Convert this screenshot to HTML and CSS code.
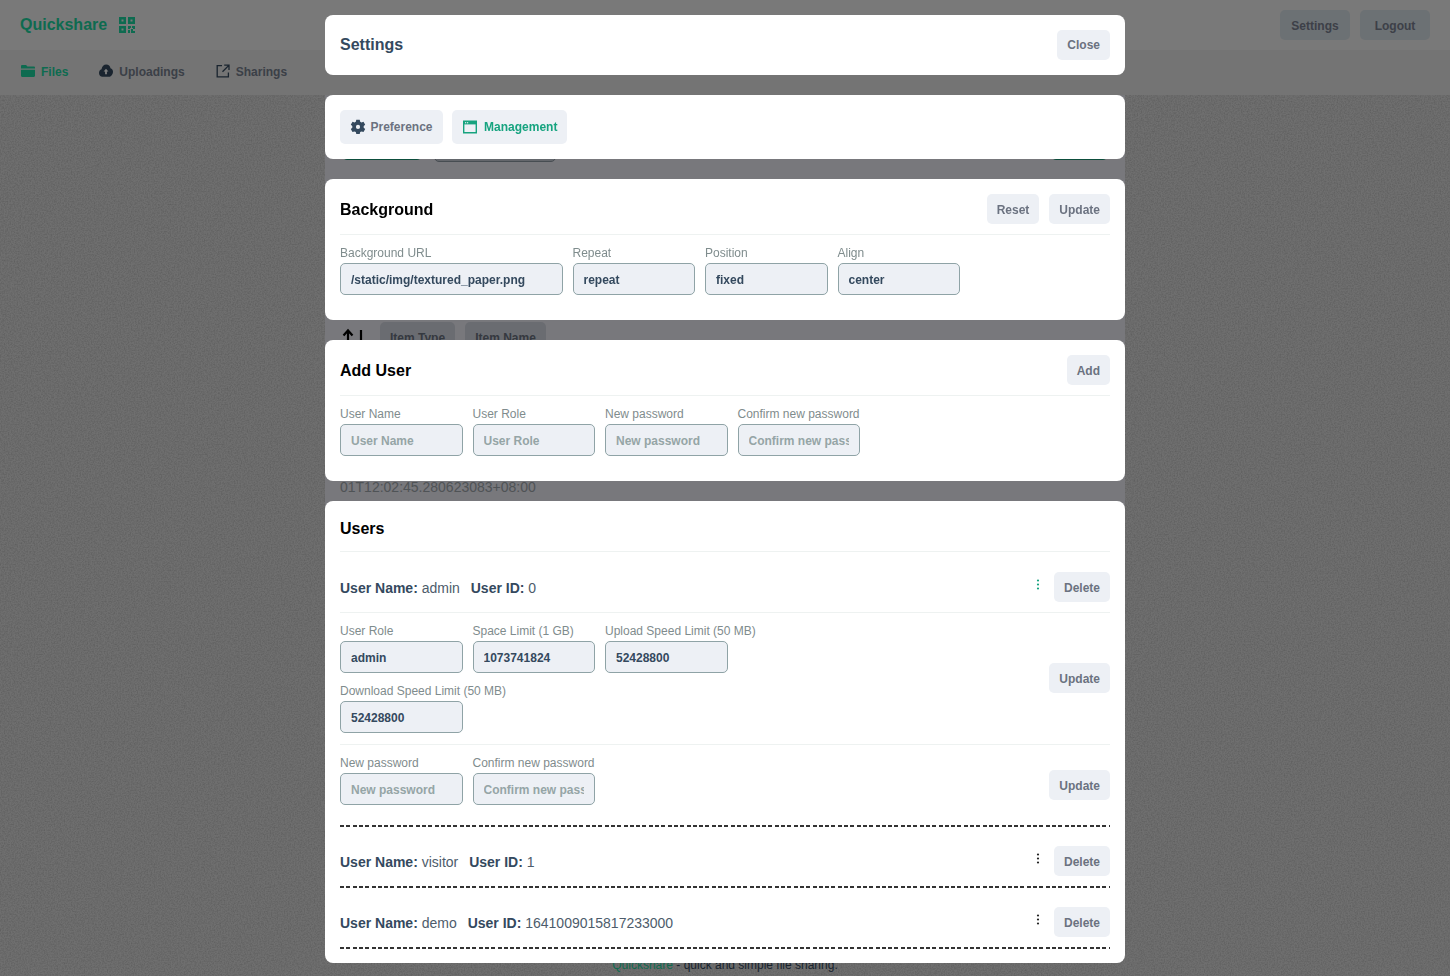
FILE: index.html
```html
<!DOCTYPE html>
<html lang="en">
<head>
  <meta charset="UTF-8">
  <meta name="viewport" content="width=device-width, initial-scale=1.0">
  <title>Quickshare</title>
  <link rel="stylesheet" href="styles.css">
</head>
<body>
  <!-- paper texture behind the page -->
  <svg class="texture" width="1450" height="976" aria-hidden="true">
    <filter id="paper">
      <feTurbulence type="fractalNoise" baseFrequency="0.7" numOctaves="2" seed="4"/>
      <feColorMatrix type="matrix" values="0 0 0 0 0.42  0 0 0 0 0.42  0 0 0 0 0.42  1.2 0 0 0 -0.42"/>
    </filter>
    <rect width="1450" height="976" filter="url(#paper)"/>
  </svg>

  <div class="page">
    <header class="topbar">
      <div class="brand">
        <span>Quickshare</span>
        <svg class="brand-icon" viewBox="0 0 16 16" width="16" height="16">
          <path fill="currentColor" fill-rule="evenodd" d="M0 0h7v7H0zM2.500 2.500v2h2v-2zM9 0h7v7H9zM11.500 2.500v2h2v-2zM0 9h7v7H0zM2.500 11.500v2h2v-2zM9 9h3v2h-1v1H9zM13 9h3v3h-2v-1h-1zM9 13h2v3H9zM12 12h2v2h2v2h-4z"/>
        </svg>
      </div>
      <div class="topbar-actions">
        <button class="btn btn-back">Settings</button>
        <button class="btn btn-back">Logout</button>
      </div>
    </header>
    <nav class="nav">
      <a class="nav-item active">
        <svg viewBox="0 0 16 16" width="16" height="16"><path fill="currentColor" d="M1 2.200C1 1.500 1.500 1 2.200 1h3.900l1.300 1.500h6.400c.7 0 1.200.5 1.200 1.200V4.600H1zM1 5.800h14v6c0 .7-.5 1.200-1.200 1.200H2.200C1.500 13 1 12.500 1 11.800z"/></svg>
        Files
      </a>
      <a class="nav-item">
        <svg viewBox="0 0 16 16" width="16" height="16"><path fill="currentColor" d="M8.200 0.500c2.300 0 4 1.600 4.300 3.700 1.500.5 2.500 1.900 2.500 3.500 0 2.200-1.700 5-3.800 5H4.400C2.500 12.700 1 11 1 8.900c0-1.700 1-3.100 2.500-3.600C4 2.500 5.900 0.500 8.200 0.500z"/><path fill="#fff" d="M8 4.800l2.400 2.800H8.900v2.700H7.100V7.600H5.600z"/></svg>
        Uploadings
      </a>
      <a class="nav-item">
        <svg viewBox="0 0 16 16" width="16" height="16"><path fill="none" stroke="currentColor" stroke-width="1.300" d="M7 1.700H2.200v11.200h11.200V8.500M9.200 1.200h4.800V6M13.800 1.400L7.500 7.700"/></svg>
        Sharings
      </a>
    </nav>
    <main class="files-panel">
      <div class="files-toolbar">
        <div class="files-toolbar-left">
          <button class="btn-upload">Upload</button>
          <div class="files-input"></div>
        </div>
        <button class="btn-upload btn-upload-small">New</button>
      </div>
      <div class="files-sort">
        <svg viewBox="0 0 22 18" width="22" height="18"><path fill="none" stroke="#000" stroke-width="2.200" d="M6 17V3M1.500 7.500L6 2.500l4.500 5M19 2v15"/></svg>
        <button class="btn-sort sort-type">Item Type</button>
        <button class="btn-sort sort-name">Item Name</button>
      </div>
      <div class="files-date">01T12:02:45.280623083+08:00</div>
    </main>
    <footer class="footer"><span class="footer-link">Quickshare</span> - quick and simple file sharing.</footer>
  </div>

  <div class="overlay">
    <section class="card card-bar">
      <h2 class="card-title title-settings">Settings</h2>
      <button class="btn">Close</button>
    </section>

    <section class="card tabs">
      <button class="tab">
        <svg viewBox="0 0 16 16" width="16" height="16"><path fill="#34495e" fill-rule="evenodd" d="M6.300 .7h3.400l.5 2 1.300.7 2-.6 1.700 2.900-1.500 1.400v1.600l1.500 1.400-1.700 2.900-2-.6-1.300.7-.5 2H6.300l-.5-2-1.300-.7-2 .6L.8 10.100l1.500-1.400V7.100L.8 5.700l1.700-2.900 2 .6 1.300-.7zM8 5.800a2.100 2.100 0 1 0 0 4.200 2.100 2.100 0 0 0 0-4.200z"/></svg>
        Preference
      </button>
      <button class="tab tab-active">
        <svg viewBox="0 0 16 16" width="16" height="16"><path fill="none" stroke="currentColor" stroke-width="1.400" d="M1.700 2.200h12.600v11.600H1.700z"/><path fill="currentColor" d="M1.700 2.200h12.600v3.200H1.700z"/><path fill="#fff" d="M3 3.300h1.200v1H3zM5 3.300h1.200v1H5z"/></svg>
        Management
      </button>
    </section>

    <section class="card">
      <div class="card-head">
        <h2 class="card-title">Background</h2>
        <div class="card-actions">
          <button class="btn">Reset</button>
          <button class="btn">Update</button>
        </div>
      </div>
      <div class="fields">
        <label class="field field-wide">Background URL<input class="input" value="/static/img/textured_paper.png"></label>
        <label class="field">Repeat<input class="input" value="repeat"></label>
        <label class="field">Position<input class="input" value="fixed"></label>
        <label class="field">Align<input class="input" value="center"></label>
      </div>
    </section>

    <section class="card">
      <div class="card-head">
        <h2 class="card-title">Add User</h2>
        <button class="btn">Add</button>
      </div>
      <div class="fields">
        <label class="field">User Name<input class="input" placeholder="User Name"></label>
        <label class="field">User Role<input class="input" placeholder="User Role"></label>
        <label class="field">New password<input class="input" type="password" placeholder="New password"></label>
        <label class="field">Confirm new password<input class="input" type="password" placeholder="Confirm new password"></label>
      </div>
    </section>

    <section class="card card-users">
      <h2 class="card-title users-title">Users</h2>

      <div class="user user-open">
        <div class="user-row">
          <div class="user-info"><b>User Name:</b> admin <b class="user-id">User ID:</b> 0</div>
          <svg class="kebab kebab-active" viewBox="0 0 16 16" width="16" height="16"><circle cx="8" cy="3.500" r="1.100"/><circle cx="8" cy="7.500" r="1.100"/><circle cx="8" cy="11.500" r="1.100"/></svg>
          <button class="btn">Delete</button>
        </div>
        <div class="user-form user-form-limits">
          <div class="fields fields-narrow">
            <label class="field">User Role<input class="input" value="admin"></label>
            <label class="field">Space Limit (1 GB)<input class="input" value="1073741824"></label>
            <label class="field">Upload Speed Limit (50 MB)<input class="input" value="52428800"></label>
            <label class="field">Download Speed Limit (50 MB)<input class="input" value="52428800"></label>
          </div>
          <button class="btn">Update</button>
        </div>
        <div class="user-form user-form-password">
          <div class="fields fields-narrow">
            <label class="field">New password<input class="input" type="password" placeholder="New password"></label>
            <label class="field">Confirm new password<input class="input" type="password" placeholder="Confirm new password"></label>
          </div>
          <button class="btn btn-lower">Update</button>
        </div>
      </div>

      <div class="user">
        <div class="user-row">
          <div class="user-info"><b>User Name:</b> visitor <b class="user-id">User ID:</b> 1</div>
          <svg class="kebab" viewBox="0 0 16 16" width="16" height="16"><circle cx="8" cy="3.500" r="1.100"/><circle cx="8" cy="7.500" r="1.100"/><circle cx="8" cy="11.500" r="1.100"/></svg>
          <button class="btn">Delete</button>
        </div>
      </div>

      <div class="user">
        <div class="user-row">
          <div class="user-info"><b>User Name:</b> demo <b class="user-id">User ID:</b> 1641009015817233000</div>
          <svg class="kebab" viewBox="0 0 16 16" width="16" height="16"><circle cx="8" cy="3.500" r="1.100"/><circle cx="8" cy="7.500" r="1.100"/><circle cx="8" cy="11.500" r="1.100"/></svg>
          <button class="btn">Delete</button>
        </div>
      </div>
    </section>
  </div>
</body>
</html>
```

FILE: styles.css
```css
* {
  box-sizing: border-box;
}
html, body {
  margin: 0;
  height: 976px;
  overflow: hidden;
}
body {
  font-family: "Liberation Sans", Arial, sans-serif;
  font-size: 14px;
  color: #34495e;
  background: #dedede;
}
button, input {
  font-family: inherit;
}

/* page behind the dialog */
.texture {
  position: absolute;
  top: 0;
  left: 0;
}
.page {
  position: relative;
}
.topbar {
  height: 50px;
  padding: 0 20px;
  display: flex;
  align-items: center;
  justify-content: space-between;
  background: #f2f2f2;
}
.brand {
  display: flex;
  align-items: center;
  gap: 12px;
  font-size: 16px;
  font-weight: bold;
  color: #1cd6a0;
}
.topbar-actions {
  display: flex;
  gap: 10px;
}
.nav {
  height: 45px;
  padding: 0 20px 1px;
  display: flex;
  align-items: center;
  gap: 30px;
  background: #e8e8e8;
}
.nav-item {
  display: flex;
  align-items: center;
  gap: 5px;
  font-size: 12px;
  font-weight: bold;
  color: #77808f;
}
.nav-item svg {
  color: #34495e;
}
.nav-item.active, .nav-item.active svg {
  color: #1cd6a0;
}
.files-panel {
  width: 800px;
  height: 860px;
  margin: 0 auto;
  padding: 35px 17px 0;
  background: #f0f0f8;
}
.files-toolbar {
  display: flex;
  justify-content: space-between;
}
.files-toolbar-left {
  display: flex;
  gap: 12px;
}
.btn-upload {
  width: 80px;
  height: 30px;
  padding: 0;
  border: 0;
  border-bottom: 2px solid #1a9d78;
  border-radius: 5px;
  background: transparent;
}
.btn-upload-small {
  width: 57px;
}
.files-input {
  width: 122px;
  height: 32px;
  border: 1px solid #8f9aa5;
  border-radius: 5px;
  background: #c9cfd8;
}
.files-sort {
  margin-top: 160px;
  display: flex;
  align-items: center;
  gap: 16px;
}
.btn-sort {
  height: 30px;
  padding: 1px 10px 0;
  border: 0;
  border-radius: 5px;
  font-size: 12px;
  font-weight: bold;
  color: #6b7280;
  background: #d5d9e2;
}
.sort-name {
  margin-left: -6px;
}
.files-date {
  margin-top: 127px;
  margin-left: -2px;
  font-size: 14px;
  color: #9fa6ac;
}
.footer {
  margin-top: 3px;
  text-align: center;
  font-size: 12px;
  line-height: 14px;
  color: #34495e;
}
.footer-link {
  color: #1cd6a0;
}

/* dialog */
.overlay {
  position: fixed;
  top: 0;
  left: 0;
  width: 100%;
  height: 100%;
  padding-top: 15px;
  display: flex;
  flex-direction: column;
  align-items: center;
  gap: 20px;
  background: rgba(0, 0, 0, 0.5);
}
.card {
  width: 800px;
  padding: 15px;
  border-radius: 8px;
  background: #fff;
}
.card-bar {
  display: flex;
  align-items: center;
  justify-content: space-between;
}
.card-head {
  display: flex;
  align-items: center;
  justify-content: space-between;
  padding-bottom: 10px;
  border-bottom: 1px solid #eef2f1;
}
.card-title {
  margin: 0;
  padding-top: 1px;
  font-size: 16px;
  line-height: 29px;
  color: #000;
}
.title-settings {
  padding-top: 0;
  line-height: 30px;
  color: #34495e;
}
.card-actions {
  display: flex;
  gap: 10px;
}
.btn {
  height: 30px;
  padding: 1px 10px 0;
  border: 0;
  border-radius: 5px;
  font-size: 12px;
  font-weight: bold;
  color: #6b7280;
  background: #edf0f5;
}
.card-bar .btn {
  padding-top: 0;
}
.btn-back {
  width: 70px;
  color: #7a8090;
  background: #d8e2e8;
}
.btn-lower {
  margin-top: 10px;
}
.tabs {
  display: flex;
  gap: 9.500px;
}
.tab {
  height: 34px;
  padding: 0 10px;
  display: flex;
  align-items: center;
  gap: 4.500px;
  border: 0;
  border-radius: 5px;
  font-size: 12px;
  font-weight: bold;
  color: #6b7280;
  background: #edf0f5;
}
.tab-active {
  gap: 6px;
  color: #16a37f;
}
.fields {
  margin: 10px 0;
  display: flex;
  flex-wrap: wrap;
  gap: 10px;
}
.fields-narrow {
  width: 420px;
  margin: 0;
}
.field {
  width: 122.5px;
  display: flex;
  flex-direction: column;
  font-size: 12px;
  line-height: 17px;
  white-space: nowrap;
  color: #7f8c8d;
}
.field-wide {
  width: 222.500px;
}
.input {
  width: 100%;
  height: 32px;
  margin-top: 1px;
  padding: 2px 10px 0;
  border: 1px solid #8fa3a6;
  border-radius: 5px;
  outline: 0;
  font-size: 12px;
  font-weight: bold;
  color: #34495e;
  background: #edf0f5;
}
.input::placeholder {
  color: #95a5a6;
  opacity: 1;
}

/* users list */
.card-users {
  padding-bottom: 14px;
}
.users-title {
  padding-top: 0;
  line-height: 26px;
  padding-bottom: 9px;
  border-bottom: 1px solid #eef2f1;
}
.user {
  padding-top: 19px;
  padding-bottom: 2px;
  background: repeating-linear-gradient(90deg, #333 0 4px, transparent 4px 6.300px) left bottom / 100% 2px no-repeat;
}
.user-open {
  padding-top: 20px;
}
.user-row {
  display: flex;
  align-items: center;
  padding-bottom: 10px;
}
.user-open .user-row {
  border-bottom: 1px solid #eef2f1;
}
.user-info {
  flex: 1;
  padding-top: 2px;
  color: #4d5c6b;
}
.user-info b {
  color: #34495e;
}
.user-id {
  margin-left: 7px;
}
.kebab {
  margin: 0 8px 4px 0;
  fill: #222;
}
.kebab-active {
  fill: #16a37f;
}
.user-form {
  display: flex;
  align-items: center;
  justify-content: space-between;
}
.user-form-limits {
  padding: 10px 0 11px;
  border-bottom: 1px solid #eef2f1;
}
.user-form-password {
  padding: 10px 0 20px;
}
```
